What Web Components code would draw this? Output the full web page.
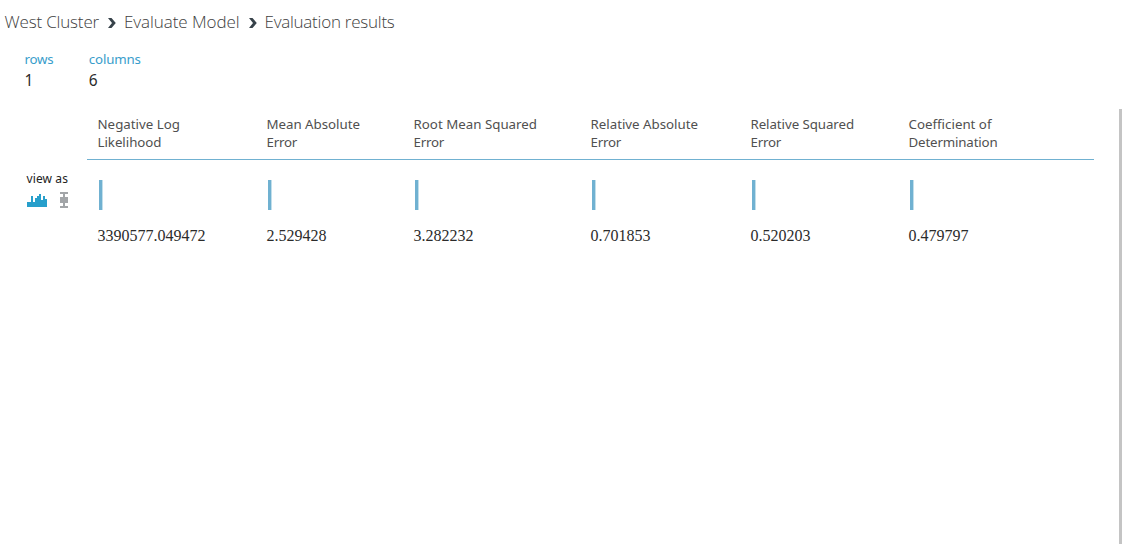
<!DOCTYPE html>
<html lang="en"><head><meta charset="utf-8"><title>Evaluation results</title>
<style>html,body{margin:0;height:100%;overflow:hidden;background:#fff}</style></head>
<body><results-page></results-page>
<script>
const define = (name, html, extra) => customElements.define(name, class extends HTMLElement {
  connectedCallback() {
    if (this.shadowRoot) return;
    const root = this.attachShadow({mode: 'open'});
    root.innerHTML = html;
    if (extra) extra(this, root);
  }
});
// A label whose tracking is adjusted to give it the width in its "w" attribute.
define('fit-label', `<style>:host{display:block;white-space:nowrap}span{display:inline-block}</style><span><slot></slot></span>`, (el, root) => {
  const s = root.querySelector('span'), n = el.textContent.length;
  s.style.letterSpacing = ((+el.getAttribute('w') - s.getBoundingClientRect().width) / n) + 'px';
});
define('crumb-arrow', `<style>:host{display:block;width:8px;height:10px}svg{display:block}</style>
<svg width="8" height="10"><path d="M0 0H3.5L7.8 5 3.5 10H0L4 5Z" fill="#37424a"/></svg>`);
define('bread-crumbs', `<style>:host{display:flex;height:44px;font:300 17px/44px "Open Sans",sans-serif;color:#404040;padding-left:4.5px}
crumb-arrow{margin:18px 8px 0 9px}</style>
<fit-label w="94.5">West Cluster</fit-label><crumb-arrow></crumb-arrow><fit-label w="115.5">Evaluate Model</fit-label><crumb-arrow></crumb-arrow><fit-label w="130">Evaluation results</fit-label>`);
define('data-count', `<style>:host{display:block;width:64.3px;font-family:"Noto Sans",sans-serif}
.k{font-size:13.3px;line-height:20px;color:#399dcb}.v{font-size:15.5px;line-height:22px;color:#2b2b2b}</style>
<div class="k"><slot name="label"></slot></div><div class="v"><slot></slot></div>`);
define('view-picker', `<style>:host{display:block;width:62px;padding:62px 0 0 25px;box-sizing:border-box;font:12px/16px "Noto Sans",sans-serif;color:#222}
fit-label{margin-left:1.5px}.i{display:flex;margin-top:5px;margin-left:2px;gap:13px}svg{display:block;flex:none}</style>
<fit-label w="41.5">view as</fit-label><div class="i">
<svg width="20" height="16" fill="#279fcb" shape-rendering="crispEdges"><path d="M0 15V10H4V4H6V10H8V6H10V4H12V2H14V8H16V4H18V7H20V15Z"/></svg>
<svg width="8" height="16" fill="#a2a5a8" shape-rendering="crispEdges"><path d="M0 0H8V2H5V5H8V11H5V14H8V16H0V14H3V11H0V5H3V2H0Z"/></svg></div>`);
define('metric-column', `<style>:host{display:block;box-sizing:border-box}
.h{height:51px;box-sizing:border-box;padding:6px 0 0 10.5px;font:13.3px/18px "Noto Sans",sans-serif;color:#505050;border-bottom:1px solid #70b1d1}
.bar{width:3px;height:30px;background:#70b1d1;border-right:1px solid #c2dfeb;margin:20px 0 0 12px}
.v{margin:16px 0 0 10.5px;font:16px/20px "Liberation Serif",serif;color:#2b2b2b}</style>
<div class="h"><slot></slot></div><div class="bar"></div><div class="v"><slot name="value"></slot></div>`);
define('results-page', `<style>:host{display:block;height:544px;overflow:hidden}
.counts{display:flex;padding:5px 0 0 24.5px;height:60px}
.body{display:flex;height:435px}
.table{display:grid;grid-template-columns:169px 147px 177px 160px 158px 196px;width:1007px;margin-left:25px;align-content:start}
.scroll{width:3px;background:#c4c4c4;margin-left:25px}</style>
<bread-crumbs></bread-crumbs>
<div class="counts"><data-count><fit-label slot="label" w="29">rows</fit-label>1</data-count><data-count><fit-label slot="label" w="52">columns</fit-label>6</data-count></div>
<div class="body"><view-picker></view-picker><div class="table">
<metric-column><fit-label w="82.5">Negative Log</fit-label><fit-label w="64">Likelihood</fit-label><span slot="value">3390577.049472</span></metric-column>
<metric-column><fit-label w="93.5">Mean Absolute</fit-label><fit-label w="30.5">Error</fit-label><span slot="value">2.529428</span></metric-column>
<metric-column><fit-label w="123.5">Root Mean Squared</fit-label><fit-label w="30.5">Error</fit-label><span slot="value">3.282232</span></metric-column>
<metric-column><fit-label w="107.5">Relative Absolute</fit-label><fit-label w="30.5">Error</fit-label><span slot="value">0.701853</span></metric-column>
<metric-column><fit-label w="103.5">Relative Squared</fit-label><fit-label w="30.5">Error</fit-label><span slot="value">0.520203</span></metric-column>
<metric-column><fit-label w="83">Coefficient of</fit-label><fit-label w="89">Determination</fit-label><span slot="value">0.479797</span></metric-column>
</div><div class="scroll"></div></div>`);
</script></body></html>
